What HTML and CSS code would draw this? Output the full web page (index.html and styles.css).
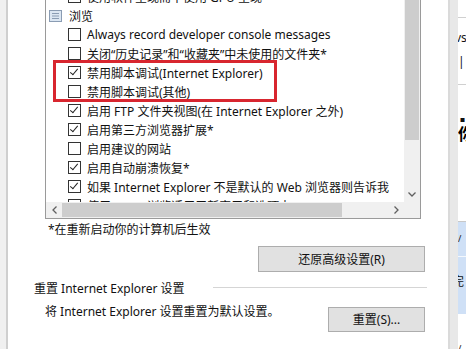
FILE: index.html
```html
<!DOCTYPE html>
<html>
<head>
  <meta charset="UTF-8">
  <title>Internet 选项 - 高级</title>
  <link rel="stylesheet" href="styles.css">
</head>
<body>
  <div class="edge"></div>

  <div class="dialog">
    <!-- 设置列表 -->
    <div class="listbox">
      <div class="viewport">
        <div class="items">
          <div class="row"><span class="cb"></span>使用软件呈现而不使用 GPU 呈现*</div>
          <div class="row group">
            <svg class="gicon" width="13" height="12" viewBox="0 0 13 12">
              <rect x="0.5" y="0.5" width="12" height="11" fill="#dbe6f2" stroke="#8a9cb3"/>
              <path d="M3 3.5h7M3 6h7M3 8.5h7" stroke="#8a9cb3" stroke-width="1"/>
            </svg>浏览
          </div>
          <div class="row"><span class="cb"></span>Always record developer console messages</div>
          <div class="row"><span class="cb"></span>关闭“历史记录”和“收藏夹”中未使用的文件夹*</div>
          <div class="row"><span class="cb on"></span>禁用脚本调试(Internet Explorer)</div>
          <div class="row"><span class="cb"></span>禁用脚本调试(其他)</div>
          <div class="row"><span class="cb on"></span>启用 FTP 文件夹视图(在 Internet Explorer 之外)</div>
          <div class="row"><span class="cb on"></span>启用第三方浏览器扩展*</div>
          <div class="row"><span class="cb"></span>启用建议的网站</div>
          <div class="row"><span class="cb on"></span>启用自动崩溃恢复*</div>
          <div class="row"><span class="cb on"></span>如果 Internet Explorer 不是默认的 Web 浏览器则告诉我</div>
          <div class="row"><span class="cb"></span>使用 Caret 浏览适用于新窗口和选项卡</div>
        </div>
        <!-- 标注框 -->
        <div class="mark"></div>
      </div>
      <div class="vscroll">
        <div class="vthumb"></div>
        <div class="arrow">
          <svg width="8" height="5" viewBox="0 0 8 5"><path d="M0.5 0.5l3.5 3.5 3.5-3.5" fill="none" stroke="#606060" stroke-width="1.3"/></svg>
        </div>
      </div>
      <div class="hscroll">
        <div class="arrow">
          <svg width="5" height="8" viewBox="0 0 5 8"><path d="M4.5 0.5l-3.5 3.5 3.5 3.5" fill="none" stroke="#606060" stroke-width="1.3"/></svg>
        </div>
        <div class="hthumb"></div>
        <div class="htrack"></div>
        <div class="arrow">
          <svg width="5" height="8" viewBox="0 0 5 8"><path d="M0.5 0.5l3.5 3.5-3.5 3.5" fill="none" stroke="#606060" stroke-width="1.3"/></svg>
        </div>
      </div>
      <div class="corner"></div>
    </div>

    <p class="note">*在重新启动你的计算机后生效</p>
    <div class="btnrow">
      <button class="btn wide">还原高级设置(R)</button>
    </div>

    <div class="grouphead">
      <span>重置 Internet Explorer 设置</span>
      <span class="rule"></span>
    </div>
    <div class="resetrow">
      <span class="desc">将 Internet Explorer 设置重置为默认设置。</span>
      <button class="btn">重置(S)...</button>
    </div>
  </div>

  <!-- 后面的窗口 -->
  <div class="side">
    <div class="sidebar"></div>
    <div class="behind">
      <div class="b1"></div>
      <div class="b2">vs</div>
      <div class="b3">| I</div>
      <div class="b4"></div>
      <div class="b5">■</div>
      <div class="b6">你</div>
      <div class="blue">
        <div class="bl1">/</div>
        <div class="bl2">完</div>
      </div>
      <div class="b7">/</div>
    </div>
  </div>
</body>
</html>
```

FILE: styles.css
```css
body {
  margin: 0;
  width: 466px;
  height: 349px;
  overflow: hidden;
  display: flex;
  background: #fff;
  font-family: "Noto Sans", "Noto Sans CJK SC", sans-serif;
  font-size: 12px;
  color: #111;
}

.edge {
  flex: none;
  width: 6px;
  background: #f0f0f0;
  border-right: 2px solid #cfcfcf;
}

.dialog {
  width: 440px;
  flex: none;
  background: #fff;
}

/* 列表框 */
.listbox {
  box-sizing: border-box;
  margin: -1px 0 0 37px;
  width: 376px;
  height: 220px;
  border: 1px solid #9a9a9a;
  display: grid;
  grid-template-columns: 1fr 16px;
  grid-template-rows: 1fr 16px;
}
.viewport {
  position: relative;
  overflow: hidden;
}
.items {
  margin-top: -13px;
  padding-left: 3px;
  white-space: nowrap;
}
.row {
  height: 19px;
  display: flex;
  align-items: center;
  padding-left: 19px;
}
.row.group {
  padding-left: 0;
}
.gicon {
  margin-right: 7px;
}
.cb {
  box-sizing: border-box;
  width: 13px;
  height: 13px;
  border: 1px solid #333;
  background: #fff;
  margin-right: 6px;
  flex: none;
  position: relative;
}
.cb.on::after {
  content: "";
  position: absolute;
  left: 3px;
  top: 0px;
  width: 3px;
  height: 7px;
  border: solid #222;
  border-width: 0 1.4px 1.4px 0;
  transform: rotate(40deg);
}
.mark {
  position: absolute;
  left: 7px;
  top: 60px;
  width: 218px;
  height: 36px;
  border: 3px solid #d8262f;
}

.vscroll {
  background: #f0f0f0;
  display: flex;
  flex-direction: column;
}
.vthumb {
  height: 140px;
  margin: 0 1px;
  background: #cdcdcd;
}
.vscroll .arrow {
  margin-top: auto;
  height: 16px;
  display: flex;
  align-items: center;
  justify-content: center;
}
.hscroll {
  background: #f0f0f0;
  display: flex;
}
.hscroll .arrow {
  width: 16px;
  display: flex;
  align-items: center;
  justify-content: center;
}
.hthumb {
  width: 280px;
  margin: 1px 0;
  background: #cdcdcd;
}
.htrack {
  flex: 1;
}
.corner {
  background: #f0f0f0;
}

.note {
  margin: 3px 0 0 40px;
  line-height: 16px;
}
.btnrow {
  display: flex;
  justify-content: flex-end;
  margin: 8px 23px 0 0;
}
.btn {
  font: inherit;
  color: #111;
  background: #e1e1e1;
  border: 1px solid #adadad;
  height: 26px;
  width: 97px;
  padding: 0;
}
.btn.wide {
  width: 167px;
}

.grouphead {
  display: flex;
  align-items: center;
  margin: 9px 21px 0 26px;
  line-height: 16px;
}
.rule {
  flex: 1;
  margin-left: 28px;
  border-top: 1px solid #d5d5d5;
  position: relative;
  top: -2px;
}
.resetrow {
  display: flex;
  justify-content: space-between;
  align-items: flex-start;
  margin: 7px 23px 0 37px;
  line-height: 16px;
}
.resetrow .btn {
  margin-top: 3px;
  height: 25px;
}

/* 右侧被遮住的窗口 */
.side {
  flex: 1;
  min-width: 0;
  display: flex;
}
.sidebar {
  flex: none;
  width: 8px;
  background: #e8e8e8;
  border-left: 2px solid #dadada;
}
.behind {
  flex: 1;
  min-width: 0;
  overflow: hidden;
  white-space: nowrap;
}
.b1 {
  height: 17px;
  border-bottom: 1px solid #d0d0d0;
}
.b2 {
  margin-left: -3px;
  margin-top: 13px;
  line-height: 14px;
}
.b3 {
  margin-top: 10px;
  line-height: 14px;
}
.b4 {
  height: 15px;
  border-bottom: 1px solid #d0d0d0;
}
.b5 {
  margin-top: 30px;
  font-size: 5px;
  line-height: 8px;
  padding-left: 2px;
}
.b6 {
  margin-top: 1px;
  font-size: 16px;
  font-weight: bold;
  line-height: 20px;
  color: #000;
}
.blue {
  margin-top: 77px;
  border-top: 1px solid #c8c8c8;
  height: 92px;
  background: #cfe0f6;
}
.bl1 {
  height: 34px;
  border-bottom: 1px solid #f4f8fd;
  line-height: 34px;
  font-size: 9px;
}
.bl2 {
  margin-top: 18px;
  margin-left: -6px;
  line-height: 14px;
}
.b7 {
  margin-top: 28px;
  font-size: 9px;
}
```
